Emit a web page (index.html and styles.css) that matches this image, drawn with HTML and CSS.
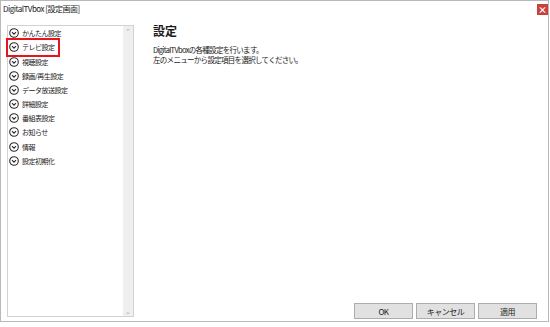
FILE: index.html
```html
<!DOCTYPE html>
<html lang="ja">
<head>
    <meta charset="UTF-8">
    <title>DigitalTVbox [設定画面]</title>
    <link rel="stylesheet" href="styles.css">
</head>
<body>
    <div class="window">
        <div class="titleBar">
            <span class="title">DigitalTVbox [設定画面]</span>
            <span class="closeButton">×</span>
        </div>
        <div class="windowBody">
            <div class="sideMenu">
                <ul class="menuList">
                    <li class="menuItem"><svg class="chevron" viewBox="0 0 10 10"><circle cx="5" cy="5" r="4.3"/><path d="M3 4.2 L5 6.2 L7 4.2"/></svg>かんたん設定</li>
                    <li class="menuItem marked"><svg class="chevron" viewBox="0 0 10 10"><circle cx="5" cy="5" r="4.3"/><path d="M3 4.2 L5 6.2 L7 4.2"/></svg>テレビ設定</li>
                    <li class="menuItem"><svg class="chevron" viewBox="0 0 10 10"><circle cx="5" cy="5" r="4.3"/><path d="M3 4.2 L5 6.2 L7 4.2"/></svg>視聴設定</li>
                    <li class="menuItem"><svg class="chevron" viewBox="0 0 10 10"><circle cx="5" cy="5" r="4.3"/><path d="M3 4.2 L5 6.2 L7 4.2"/></svg>録画/再生設定</li>
                    <li class="menuItem"><svg class="chevron" viewBox="0 0 10 10"><circle cx="5" cy="5" r="4.3"/><path d="M3 4.2 L5 6.2 L7 4.2"/></svg>データ放送設定</li>
                    <li class="menuItem"><svg class="chevron" viewBox="0 0 10 10"><circle cx="5" cy="5" r="4.3"/><path d="M3 4.2 L5 6.2 L7 4.2"/></svg>詳細設定</li>
                    <li class="menuItem"><svg class="chevron" viewBox="0 0 10 10"><circle cx="5" cy="5" r="4.3"/><path d="M3 4.2 L5 6.2 L7 4.2"/></svg>番組表設定</li>
                    <li class="menuItem"><svg class="chevron" viewBox="0 0 10 10"><circle cx="5" cy="5" r="4.3"/><path d="M3 4.2 L5 6.2 L7 4.2"/></svg>お知らせ</li>
                    <li class="menuItem"><svg class="chevron" viewBox="0 0 10 10"><circle cx="5" cy="5" r="4.3"/><path d="M3 4.2 L5 6.2 L7 4.2"/></svg>情報</li>
                    <li class="menuItem"><svg class="chevron" viewBox="0 0 10 10"><circle cx="5" cy="5" r="4.3"/><path d="M3 4.2 L5 6.2 L7 4.2"/></svg>設定初期化</li>
                </ul>
                <div class="scrollBar">
                    <span class="scrollArrow">&#8963;</span>
                    <span class="scrollArrow">&#8964;</span>
                </div>
            </div>
            <div class="content">
                <h1 class="heading">設定</h1>
                <p class="description">DigitalTVboxの各種設定を行います。<br>左のメニューから設定項目を選択してください。</p>
                <div class="buttonRow">
                    <button class="dialogButton">OK</button>
                    <button class="dialogButton">キャンセル</button>
                    <button class="dialogButton">適用</button>
                </div>
            </div>
        </div>
    </div>
</body>
</html>
```

FILE: styles.css
```css
* {
    margin: 0;
    padding: 0;
    box-sizing: border-box;
}

body {
    font-family: "Noto Sans CJK JP", "Liberation Sans", sans-serif;
    font-size: 8px;
    color: #1a1a1a;
    background: #fff;
}

.window {
    width: 549px;
    height: 322px;
    border: 1px solid #b9b9b9;
    display: flex;
    flex-direction: column;
}

.titleBar {
    height: 15px;
    display: flex;
    justify-content: space-between;
    align-items: center;
    padding: 0 0 0 2px;
}

.title {
    font-size: 8px;
    letter-spacing: -0.5px;
}

.closeButton {
    width: 11px;
    height: 11px;
    background: #c9403e;
    color: #fff;
    font-size: 9px;
    line-height: 11px;
    text-align: center;
    font-weight: bold;
    margin-top: 2px;
}

.windowBody {
    flex: 1;
    display: flex;
    padding: 9px 0 2px 6px;
}

.sideMenu {
    width: 127px;
    border: 1px solid #d2d2d2;
    display: flex;
    margin-bottom: 2px;
}

.menuList {
    flex: 1;
    list-style: none;
}

.menuItem {
    height: 14.2px;
    display: flex;
    align-items: center;
    gap: 3px;
    padding-left: 1px;
    padding-right: 3px;
    width: fit-content;
    font-size: 7px;
    letter-spacing: -0.5px;
}

.menuItem.marked {
    outline: 2px solid #e8131b;
    height: 15px;
    margin: -0.4px 0;
}

.chevron {
    width: 10px;
    height: 10px;
    fill: none;
    stroke: #2b2b2b;
    stroke-width: 1.1;
    flex-shrink: 0;
}

.scrollBar {
    width: 10px;
    background: #efefef;
    display: flex;
    flex-direction: column;
    justify-content: space-between;
    align-items: center;
    color: #a8a8a8;
    font-size: 7px;
    line-height: 10px;
}

.content {
    flex: 1;
    display: flex;
    flex-direction: column;
    padding: 0 11px 0 19px;
}

.heading {
    font-size: 12px;
    font-weight: bold;
    line-height: 12px;
    margin-bottom: 8px;
}

.description {
    line-height: 10px;
    font-size: 7.5px;
    letter-spacing: -0.7px;
}

.buttonRow {
    margin-top: auto;
    display: flex;
    justify-content: flex-end;
    gap: 3px;
}

.dialogButton {
    width: 59px;
    height: 16px;
    border: 1px solid #adadad;
    background: #e1e1e1;
    font-family: inherit;
    font-size: 8px;
    letter-spacing: -0.5px;
    color: #1a1a1a;
}
```
